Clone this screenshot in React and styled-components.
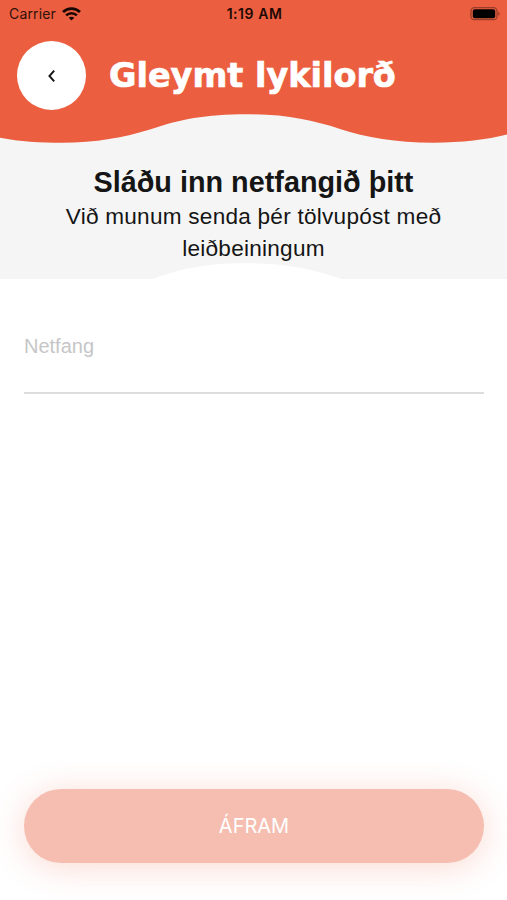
import React, { useState } from "react";
import styled, { createGlobalStyle } from "styled-components";

const theme = {
  primary: "#eb5f40",
  disabled: "#f6beb1",
  grey: "#f5f5f5",
  text: "#151515",
  line: "#dcdcdc",
  placeholder: "#c6c6c8",
};

const GlobalStyle = createGlobalStyle`
  * {
    box-sizing: border-box;
  }

  body {
    margin: 0;
    background: #fff;
    font-family: "Liberation Sans", Arial, sans-serif;
    color: ${theme.text};
  }
`;

const Screen = styled.div`
  width: 507px;
  height: 900px;
  display: flex;
  flex-direction: column;
  overflow: hidden;
`;

const Header = styled.header`
  height: 114px;
  flex-shrink: 0;
  background: ${theme.primary};
`;

const StatusBar = styled.div`
  height: 28px;
  padding: 0 7px 0 9px;
  display: grid;
  grid-template-columns: 1fr auto 1fr;
  align-items: center;
  font-family: Inter, sans-serif;
  font-size: 14px;
  line-height: 28px;
  color: #30100a;
`;

const Carrier = styled.div`
  display: flex;
  align-items: center;
  gap: 6px;
  letter-spacing: 0.15px;
`;

const Clock = styled.div`
  color: #220804;
  font-weight: 600;
  letter-spacing: 0.55px;
`;

const Battery = styled.svg`
  justify-self: end;
`;

const TitleRow = styled.div`
  display: flex;
  align-items: center;
  gap: 23px;
  padding: 13px 0 0 17px;
`;

const BackButton = styled.button`
  width: 69px;
  height: 69px;
  padding: 0;
  display: flex;
  align-items: center;
  justify-content: center;
  border: 0;
  border-radius: 50%;
  background: #fff;
`;

const Title = styled.h1`
  margin: 0 0 2px;
  font-family: "DejaVu Sans", sans-serif;
  font-size: 34px;
  font-weight: 700;
  line-height: 40px;
  white-space: nowrap;
  color: #fff;
  -webkit-text-stroke: 0.7px #fff;
  transform: scaleX(0.984);
  transform-origin: left;
`;

const Wave = styled.svg`
  display: block;
  flex-shrink: 0;
`;

const Intro = styled.section`
  height: 165px;
  flex-shrink: 0;
  display: flex;
  flex-direction: column;
  background: ${theme.grey};
  text-align: center;
`;

const Heading = styled.h2`
  margin: 22px 0 0;
  font-size: 28.8px;
  line-height: 34px;
`;

const Description = styled.p`
  width: 420px;
  margin: 2px auto 0;
  font-size: 22.6px;
  line-height: 32px;
  letter-spacing: 0.24px;
`;

const IntroWave = styled(Wave)`
  margin-top: -2px;
`;

const Form = styled.form`
  flex: 1;
  padding: 42px 23px 37px 24px;
  display: flex;
  flex-direction: column;
  justify-content: space-between;
`;

const EmailInput = styled.input`
  width: 100%;
  height: 73px;
  padding: 0 0 21px;
  border: 0;
  border-bottom: 2px solid ${theme.line};
  outline: none;
  background: transparent;
  font-family: inherit;
  font-size: 20px;

  &::placeholder {
    color: ${theme.placeholder};
    opacity: 1;
  }
`;

const SubmitButton = styled.button`
  height: 74px;
  padding: 0;
  border: 0;
  border-radius: 37px;
  background: ${(props) => (props.disabled ? theme.disabled : theme.primary)};
  box-shadow: 0 4px 34px rgba(235, 95, 64, 0.24);
  font-family: Inter, sans-serif;
  font-size: 20px;
  font-weight: 400;
  color: #fff;
`;

const WifiIcon = () => (
  <svg width="19" height="14" viewBox="0 0 19 14" fill="none" stroke="#180603">
    <path d="M1 5.1C5.8.5 13.2.5 18 5.1" strokeWidth="2.8" />
    <path d="M4.1 8.3c3.1-2.9 7.7-2.9 10.8 0" strokeWidth="2.5" />
    <path
      d="M6.7 10.8c1.6-1.5 4-1.5 5.6 0L9.5 13.6z"
      fill="#180603"
      stroke="none"
    />
  </svg>
);

const App = () => {
  const [email, setEmail] = useState("");

  return (
    <>
      <GlobalStyle />
      <Screen>
        <Header>
          <StatusBar>
            <Carrier>
              Carrier
              <WifiIcon />
            </Carrier>
            <Clock>1:19 AM</Clock>
            <Battery width="30" height="14" viewBox="0 0 30 14">
              <rect
                x="1"
                y="0.7"
                width="26"
                height="12"
                rx="3.5"
                fill="none"
                stroke="#9a3c28"
                strokeWidth="1.3"
              />
              <rect x="2.8" y="2.2" width="22.4" height="9" rx="1.8" />
              <path d="M28.2 4.7v4c2-1 2-3 0-4z" fill="#9a3c28" />
            </Battery>
          </StatusBar>
          <TitleRow>
            <BackButton aria-label="Til baka">
              <svg width="10" height="14" viewBox="0 0 10 14" fill="none">
                <path
                  d="M7.2 1.6 2.4 7l4.8 5.4"
                  stroke="#151515"
                  strokeWidth="1.9"
                />
              </svg>
            </BackButton>
            <Title>Gleymt lykilorð</Title>
          </TitleRow>
        </Header>

        <Intro>
          <Wave width="507" height="29" viewBox="0 0 507 29">
            <path
              d="M0 0V23.7C20 27.5 40 28.7 62 28.7C96 28.7 124 23.5 150 15.5C180 5.5 205 .3 247 .3C286 .3 312 6 340 15C366 23.5 396 28.7 433 28.7C462 28.7 487 25.5 507 20.5V0Z"
              fill={theme.primary}
            />
          </Wave>
          <Heading>Sláðu inn netfangið þitt</Heading>
          <Description>
            Við munum senda þér tölvupóst með leiðbeiningum
          </Description>
          <IntroWave width="507" height="18" viewBox="0 0 507 18">
            <path
              d="M147 18C180 5.5 205 .3 247 .3C286 .3 312 6 348 18Z"
              fill="#fff"
            />
          </IntroWave>
        </Intro>

        <Form>
          <EmailInput
            type="email"
            placeholder="Netfang"
            value={email}
            onChange={(event) => setEmail(event.target.value)}
          />
          <SubmitButton disabled={!email}>ÁFRAM</SubmitButton>
        </Form>
      </Screen>
    </>
  );
};

export default App;
